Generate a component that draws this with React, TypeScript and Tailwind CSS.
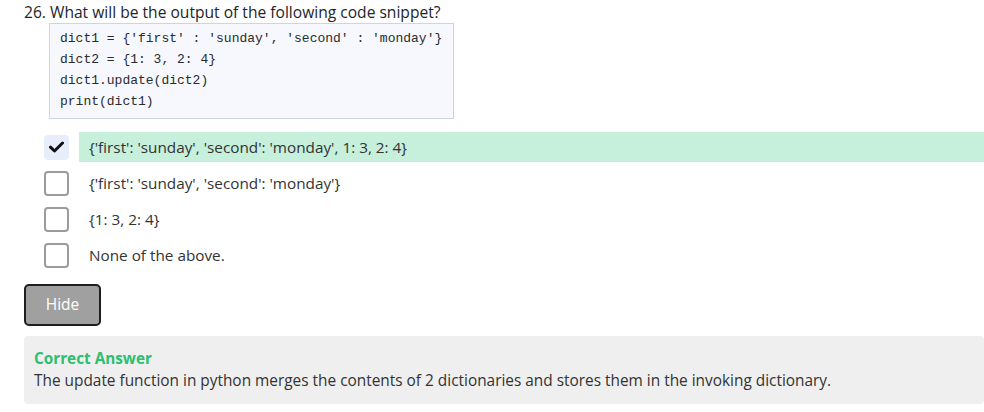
import React from 'react';

const options = [
  { text: "{'first': 'sunday', 'second': 'monday', 1: 3, 2: 4}", checked: true },
  { text: "{'first': 'sunday', 'second': 'monday'}", checked: false },
  { text: '{1: 3, 2: 4}', checked: false },
  { text: 'None of the above.', checked: false },
];

const code = [
  "dict1 = {'first' : 'sunday', 'second' : 'monday'}",
  'dict2 = {1: 3, 2: 4}',
  'dict1.update(dict2)',
  'print(dict1)',
];

const App = () => {
  return (
    <div className="w-[984px] h-[412px] bg-white pl-6 pt-[2px] font-['Open_Sans',sans-serif] text-[#212529] overflow-hidden">
      <h2 className="text-[15.6px] leading-[20px]">26. What will be the output of the following code snippet?</h2>

      <div className="ml-[25px] mt-[1px] w-[405px] h-[96px] border border-[#cbd5e6] bg-[#f6f8fe] pl-[10px] pt-[4px]">
        {code.map((line, i) => (
          <div key={i} className="font-['Liberation_Mono',monospace] text-[13px] leading-[21px] text-[#2b2b2b] whitespace-pre">
            {line}
          </div>
        ))}
      </div>

      <div className="mt-[10px] flex flex-col">
        {options.map((o, i) => (
          <div key={i} className="h-[36px] flex items-center">
            <div className="ml-[20px] w-[25px] h-[25px] shrink-0">
              {o.checked ? (
                <div className="w-full h-full rounded-[4px] bg-[#e7edfb] flex items-center justify-center">
                  <svg width="15" height="12" viewBox="0 0 15 12">
                    <path d="M1.5 6.2 L5.5 10 L13.5 2" fill="none" stroke="#111" strokeWidth="3" strokeLinecap="round" strokeLinejoin="round" />
                  </svg>
                </div>
              ) : (
                <div className="w-full h-full rounded-[4px] border-2 border-[#9c9c9c] bg-white" />
              )}
            </div>
            <div
              className={
                'ml-[10px] flex-1 h-[30px] flex items-center pl-[10px] text-[15.3px] text-[#333] ' +
                (o.checked ? 'bg-[#c6efdc]' : '')
              }
            >
              {o.text}
            </div>
          </div>
        ))}
      </div>

      <button className="mt-[11px] w-[77px] h-[42px] rounded-[5px] border-2 border-[#1e1e1e] bg-[#a0a0a0] text-white text-[15.5px]">
        Hide
      </button>

      <div className="mt-[10px] h-[68px] rounded-[4px] bg-[#efefef] pl-[10px] pt-[12px]">
        <div className="text-[15.3px] leading-[20px] font-bold text-[#2cbf70]">Correct Answer</div>
        <div className="text-[15.4px] leading-[26px] text-[#333]">
          The update function in python merges the contents of 2 dictionaries and stores them in the invoking dictionary.
        </div>
      </div>
    </div>
  );
};

export default App;
